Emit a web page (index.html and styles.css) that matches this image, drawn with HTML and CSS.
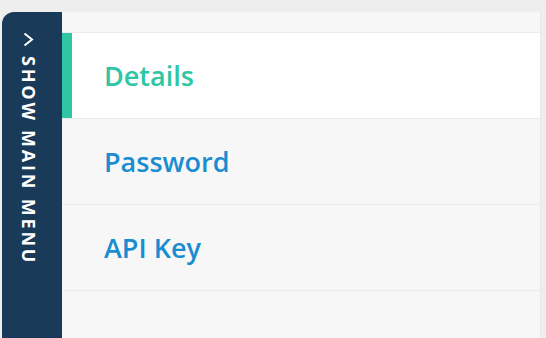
FILE: index.html
```html
<!DOCTYPE html>
<html lang="en">
<head>
  <meta charset="UTF-8">
  <title>Account Settings</title>
  <link rel="stylesheet" href="styles.css">
</head>
<body>
  <div class="layout">
    <div class="sidebar">
      <svg class="chevron" width="11" height="15" viewBox="0 0 11 15">
        <polyline points="1.5,1.5 9,7.5 1.5,13.5" fill="none" stroke="#ffffff" stroke-width="2"/>
      </svg>
      <span class="sidebar-label">Show main menu</span>
    </div>
    <div class="panel">
      <ul class="tabs">
        <li class="tab active">Details</li>
        <li class="tab">Password</li>
        <li class="tab">API Key</li>
      </ul>
    </div>
  </div>
</body>
</html>
```

FILE: styles.css
```css
html, body {
  height: 100%;
}
body {
  margin: 0;
  background-color: #eeeeee;
  font-family: "Open Sans", Arial, sans-serif;
  overflow: hidden;
}
.layout {
  display: flex;
  height: 100%;
  box-sizing: border-box;
  padding: 12px 5px 0 2px;
}
.sidebar {
  width: 60px;
  flex-shrink: 0;
  background-color: #1a3a59;
  border-top-left-radius: 12px;
  display: flex;
  flex-direction: column;
  align-items: center;
  padding: 20px 7px 0 0;
  box-sizing: border-box;
}
.chevron {
  display: block;
}
.sidebar-label {
  writing-mode: vertical-rl;
  margin-top: 9px;
  color: #ffffff;
  font-weight: 700;
  font-size: 18px;
  letter-spacing: 2.8px;
  text-transform: uppercase;
}
.panel {
  flex: 1;
  background-color: #f7f7f7;
  border-right: 1px solid #e8e8e8;
  padding-top: 20px;
}
.tabs {
  list-style: none;
  margin: 0;
  padding: 0;
  border-top: 1px solid #ebebeb;
}
.tab {
  height: 85px;
  display: flex;
  align-items: center;
  padding-left: 42px;
  border-bottom: 1px solid #ebebeb;
  color: #1a8dd1;
  font-size: 27px;
  font-weight: 600;
}
.tab.active {
  background-color: #ffffff;
  color: #2ec6a3;
  box-shadow: inset 10px 0 0 #2ec6a3;
}
```
